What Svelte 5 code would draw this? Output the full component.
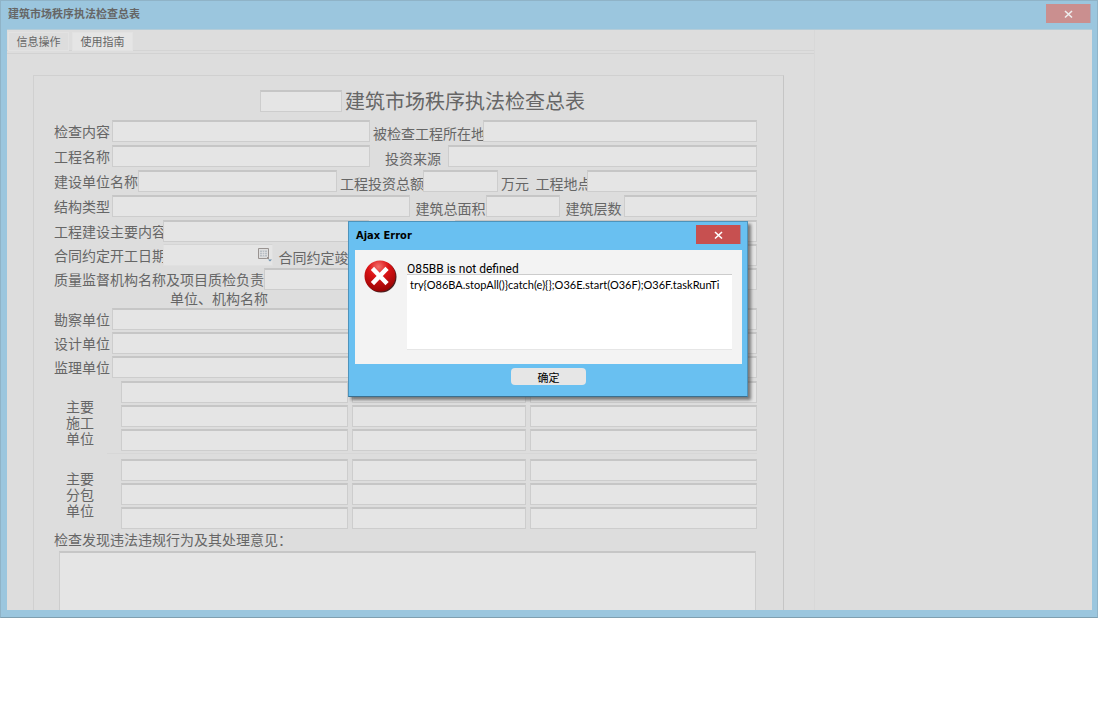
<script lang="ts">
  type Field = { label?: string; labelWidth: number; width?: number; kind?: "date" }

  const basics: Field[][] = [
    [
      { label: "检查内容", labelWidth: 58, width: 258 },
      { label: "被检查工程所在地", labelWidth: 113 },
    ],
    [
      { label: "工程名称", labelWidth: 58, width: 258 },
      { label: "   投资来源", labelWidth: 78 },
    ],
    [
      { label: "建设单位名称", labelWidth: 84, width: 199 },
      { label: "工程投资总额", labelWidth: 86, width: 75 },
      { label: "万元 \u2009工程地点", labelWidth: 89 },
    ],
    [
      { label: "结构类型", labelWidth: 58, width: 298 },
      { label: "\u2009建筑总面积", labelWidth: 76, width: 74 },
      { label: "\u2009建筑层数", labelWidth: 64 },
    ],
  ]

  const contract: Field[][] = [
    [
      { label: "工程建设主要内容", labelWidth: 109, width: 206 },
      { labelWidth: 86 },
    ],
    [
      { label: "合同约定开工日期", labelWidth: 109, width: 110, kind: "date" },
      { label: "\u2009合同约定竣工日期", labelWidth: 121, width: 120, kind: "date" },
      { labelWidth: 6 },
    ],
    [{ label: "质量监督机构名称及项目质检负责", labelWidth: 210 }],
  ]

  const units = ["勘察单位", "设计单位", "监理单位"]
  const groups = [
    ["主要", "施工", "单位"],
    ["主要", "分包", "单位"],
  ]

  let dialogOpen = $state(true)
  let script = $state("try{O86BA.stopAll()}catch(e){};O36E.start(O36F);O36F.taskRunTi")

  const close = () => (dialogOpen = false)
</script>

{#snippet row(fields: Field[], name: string)}
  <div class="row">
    {#each fields as field, i}
      <label for="{name}-{i}" class="label" style:width="{field.labelWidth}px">{field.label ?? ""}</label>
      <span class="cell" class:grow={!field.width} style:width={field.width ? `${field.width}px` : null}>
        <input id="{name}-{i}" class="box" class:date={field.kind === "date"} type="text" />
        {#if field.kind === "date"}
          <svg class="calendar" width="15" height="15" viewBox="0 0 15 15">
            <path d="M1.5 1.5h10v8l-2 2h-8z" fill="#dfdfdf" stroke="#999391" />
            <path d="M3 3.500h7v6H3z" fill="#b9bfc5" />
            <path d="M3 5.500h7M3 7.500h7M5.500 3.500v6M7.500 3.500v6" stroke="#e6e6e6" stroke-width="0.600" />
            <path d="M9 12l3-3v3z" fill="#999391" />
            <path d="M11 12.500h4l-2 2z" fill="#6b8fae" />
          </svg>
        {/if}
      </span>
    {/each}
  </div>
{/snippet}

<main class="window">
  <header class="titlebar">
    <h1>建筑市场秩序执法检查总表</h1>
    <button class="close" aria-label="关闭">
      <svg width="10" height="10" viewBox="0 0 10 10"><path d="M2 2l7 6.500M9 2L2 8.500" /></svg>
    </button>
  </header>

  <div class="body">
    <div class="panel">
      <nav class="tabs">
        <button class="tab">信息操作</button>
        <button class="tab raised">使用指南</button>
      </nav>

      <form class="form">
        <div class="heading">
          <input class="box" type="text" aria-label="编号" />
          <h2>建筑市场秩序执法检查总表</h2>
        </div>

        <section class="rows loose">
          {#each basics as fields, i}
            {@render row(fields, `basic-${i}`)}
          {/each}
        </section>
        <section class="rows">
          {#each contract as fields, i}
            {@render row(fields, `contract-${i}`)}
          {/each}
        </section>

        <p class="column-title">单位、机构名称</p>
        <section class="rows">
          {#each units as unit, i}
            {@render row([{ label: unit, labelWidth: 58 }], `unit-${i}`)}
          {/each}
        </section>

        {#each groups as group, g}
          <fieldset class="group" class:ruled={g > 0}>
            <div class="group-label">
              {#each group as line}<span>{line}</span>{/each}
            </div>
            <div class="group-grid">
              {#each Array(9) as _, i}
                <input class="box" type="text" aria-label="{group.join('')} {i + 1}" />
              {/each}
            </div>
          </fieldset>
        {/each}

        <label class="opinion-label" for="opinion">检查发现违法违规行为及其处理意见：</label>
        <textarea id="opinion" class="opinion"></textarea>
      </form>
    </div>
  </div>

  {#if dialogOpen}
    <div class="overlay">
      <div class="dialog" role="alertdialog" aria-labelledby="dialog-title">
        <header class="titlebar">
          <h1 id="dialog-title">Ajax Error</h1>
          <button class="close" aria-label="关闭" onclick={close}>
            <svg width="10" height="10" viewBox="0 0 10 10"><path d="M2 2l7 6.500M9 2L2 8.500" /></svg>
          </button>
        </header>
        <div class="message">
          <svg class="error-icon" width="34" height="34" viewBox="0 0 34 34">
            <defs>
              <radialGradient id="ball" cx="45%" cy="20%" r="80%">
                <stop offset="0" stop-color="#f2706c" />
                <stop offset="0.400" stop-color="#dc1416" />
                <stop offset="1" stop-color="#980404" />
              </radialGradient>
            </defs>
            <circle cx="17" cy="17" r="15.500" fill="#4a2020" />
            <circle cx="16" cy="16" r="15.500" fill="url(#ball)" />
            <path d="M10 10l11.500 12M21.500 10L10 22" stroke="#fff" stroke-width="4.500" stroke-linecap="square" />
          </svg>
          <div class="detail">
            <label for="script">O85BB is not defined</label>
            <textarea id="script" bind:value={script}></textarea>
          </div>
        </div>
        <footer>
          <button class="confirm" onclick={close}>确定</button>
        </footer>
      </div>
    </div>
  {/if}
</main>

<style>
  :global(body) {
    margin: 0;
    background: #fff;
  }

  .window,
  .window :is(button, input, textarea) {
    font-family: "DejaVu Sans Condensed", "Noto Sans CJK SC", sans-serif;
    box-sizing: border-box;
  }

  .window {
    position: relative;
    padding: 0 5px 7px 6px;
    border: 1px solid #8fb3c7;
    border-bottom-color: #7f9fb0;
    background: #9bc6de;
    color: #666;
    overflow: hidden;
  }

  h1,
  h2,
  p {
    margin: 0;
  }

  button {
    padding: 0;
    border: 0;
    color: inherit;
  }

  .titlebar {
    display: flex;
    justify-content: space-between;
    align-items: flex-start;
    height: 28px;
  }

  .titlebar h1 {
    padding-left: 1px;
    font-size: 11px;
    line-height: 28px;
  }

  .close {
    display: grid;
    place-items: center;
    width: 45px;
    height: 19px;
    margin: 3px 1px 0 0;
    border-right: 1px solid #a8a9bd;
    background: #ca8f8f;
  }

  .close path {
    stroke: #eee;
    stroke-width: 1.6;
  }

  .body {
    border-top: 1px solid #b4ccd8;
    background: #ddd;
  }

  .panel {
    max-width: 808px;
    box-sizing: border-box;
    border-right: 1px solid #d8d8d8;
  }

  .tabs {
    display: flex;
    gap: 3px;
    height: 24px;
    box-sizing: border-box;
    padding: 2px 1px 0;
    border-bottom: 1px solid #d2d2d2;
    box-shadow: 0 -2px #ddd inset, 0 -3px #d4d4d4 inset;
  }

  .tab {
    width: 61px;
    height: 19px;
    border: 1px solid #e2e2e2;
    background: #ddd;
    font-size: 11px;
    line-height: 19px;
  }

  .raised {
    background: #e5e5e5;
  }

  .form {
    margin: 21px 30px 0 26px;
    padding: 14px 26px 0 20px;
    border: 1px solid #d0d0d0;
    border-right-color: #c5c5c5;
    border-bottom: 0;
    font-size: 14px;
  }

  .heading {
    display: flex;
    gap: 3px;
    padding: 0 0 8px 206px;
  }

  .heading .box {
    width: 82px;
  }

  .heading h2 {
    height: 22px;
    font-size: 20px;
    font-weight: 400;
    line-height: 24px;
    white-space: nowrap;
  }

  .box {
    display: block;
    width: 100%;
    height: 22px;
    padding: 0 3px;
    border: 1px solid #cdcdcd;
    border-top: 2px solid #c6c6c6;
    background: #e5e5e5;
    color: #666;
    font-size: 12px;
  }

  .date {
    border-color: #e0e0e0;
    border-top: 1px solid #d5d5d5;
  }

  .rows {
    display: flex;
    flex-direction: column;
    gap: 2px;
  }

  .loose {
    gap: 3px;
    padding-bottom: 3px;
  }

  .row {
    display: flex;
  }

  .label {
    flex: none;
    height: 24px;
    margin-bottom: -2px;
    line-height: 24px;
    white-space: pre;
    overflow: hidden;
  }

  .cell + .label {
    box-sizing: border-box;
    height: 26px;
    margin-bottom: -4px;
    padding: 2px 0 0 3px;
  }

  .cell {
    position: relative;
    flex: none;
  }

  .grow {
    flex: 1;
  }

  .calendar {
    position: absolute;
    top: 3px;
    right: 1px;
  }

  .column-title {
    padding-left: 116px;
    line-height: 18px;
  }

  .group {
    display: flex;
    min-width: 0;
    margin: 3px 0 0;
    padding: 0;
    border: 0;
  }

  .group-label {
    display: flex;
    flex-direction: column;
    box-sizing: border-box;
    width: 53px;
    padding: 18px 0 0 12px;
    line-height: 16px;
  }

  .group-grid {
    flex: 1;
    display: grid;
    grid-template-columns: 227fr 174fr 227fr;
    gap: 2px 4px;
    padding-left: 14px;
  }

  .ruled {
    margin-top: 2px;
  }

  .ruled .group-grid {
    padding-top: 5px;
    border-top: 1px solid #d7d7d7;
  }

  .opinion-label {
    display: block;
    line-height: 22px;
  }

  .opinion {
    display: block;
    width: calc(100% - 6px);
    height: 59px;
    margin-left: 5px;
    border: 1px solid #cdcdcd;
    border-top: 2px solid #c6c6c6;
    border-bottom: 0;
    background: #e5e5e5;
    resize: none;
  }

  .overlay {
    position: absolute;
    inset: 0;
    display: grid;
    place-items: center;
    padding-right: 2px;
  }

  .dialog {
    width: 400px;
    box-sizing: border-box;
    padding: 0 5px 0 6px;
    border: 1px solid #4e93bb;
    border-bottom-color: #3b6f8e;
    background: #69c0f1;
    box-shadow: 3px 3px 3px #444a;
    color: #000;
  }

  .dialog .close {
    border-right-color: #8c8bb0;
    background: #c75050;
  }

  .dialog .close path {
    stroke: #fff;
  }

  .message {
    display: flex;
    gap: 9px;
    height: 114px;
    box-sizing: border-box;
    padding: 10px 10px 14px 9px;
    background: #f3f3f3;
  }

  .error-icon {
    flex: none;
  }

  .detail {
    flex: 1;
    display: flex;
    flex-direction: column;
  }

  .detail label {
    height: 14px;
    font-family: Roboto, sans-serif;
    font-size: 12px;
    line-height: 18px;
  }

  .detail textarea {
    flex: 1;
    padding: 3px;
    border: 0;
    border-top: 1px solid #ccc;
    border-bottom: 1px solid #e6e6e6;
    background: #fff;
    color: #000;
    font-family: Lato, sans-serif;
    font-size: 11px;
    line-height: 14px;
    white-space: pre;
    resize: none;
    overflow: hidden;
  }

  footer {
    display: flex;
    justify-content: center;
    height: 32px;
    padding-top: 4px;
    box-sizing: border-box;
  }

  .confirm {
    width: 75px;
    height: 17px;
    padding-top: 2px;
    border-radius: 4px;
    background: #e6e6e6;
    font-size: 11px;
    line-height: 17px;
  }
</style>
